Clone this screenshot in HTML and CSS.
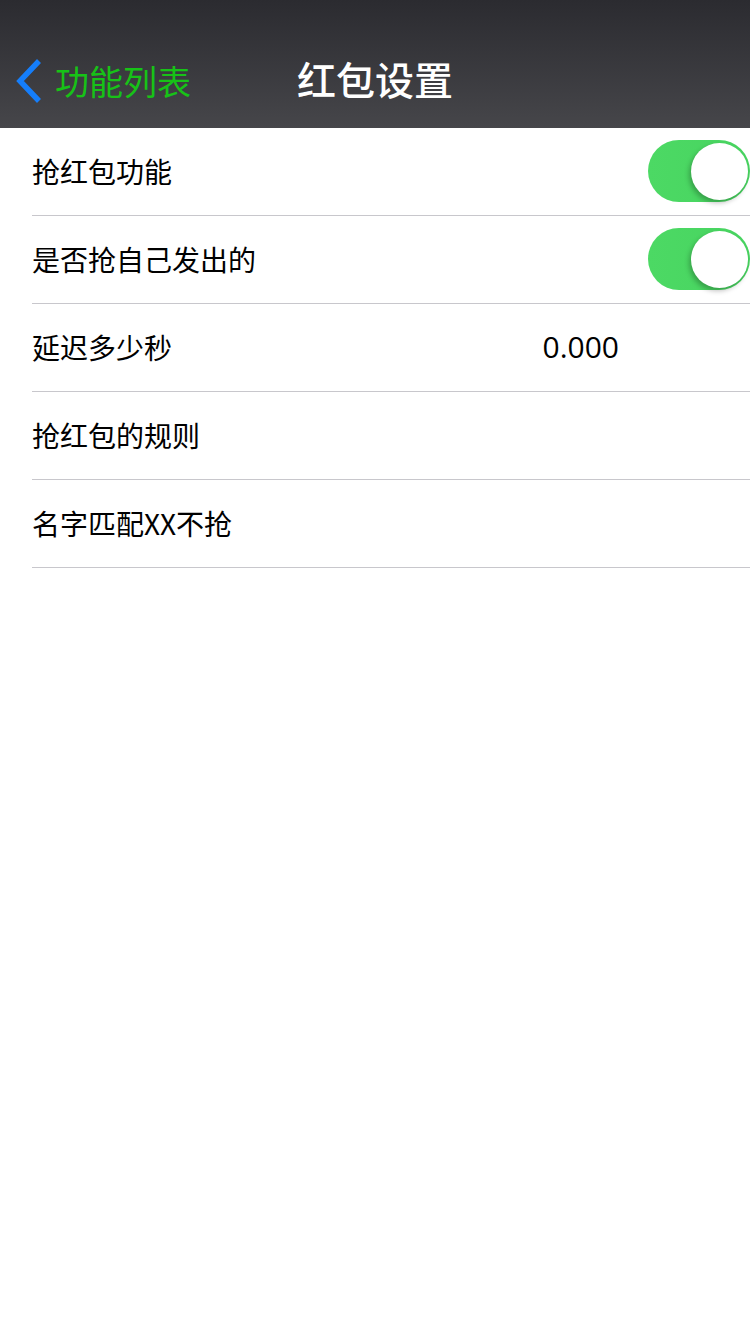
FILE: index.html
```html
<html lang="zh-CN">
<head>
	<meta http-equiv="Content-Type" content="text/html; charset=utf-8">
	<meta name="viewport" content="width=device-width, initial-scale=1.0">
	<title>红包设置</title>
	<link rel="stylesheet" href="styles.css">
</head>
<body>

	<div class="navbar">
		<div class="nav-back">
			<svg class="chevron" width="30" height="48" viewBox="0 0 30 48">
				<polyline points="25,4 6,24 25,44" fill="none" stroke="#157efb" stroke-width="5.5"/>
			</svg>
			<span>功能列表</span>
		</div>
		<div class="nav-title">红包设置</div>
	</div>

	<div class="list">
		<div class="cell">
			<span class="label">抢红包功能</span>
			<div class="switch on"><i class="knob"></i></div>
		</div>
		<div class="cell">
			<span class="label">是否抢自己发出的</span>
			<div class="switch on"><i class="knob"></i></div>
		</div>
		<div class="cell">
			<span class="label">延迟多少秒</span>
			<span class="value">0.000</span>
		</div>
		<div class="cell">
			<span class="label">抢红包的规则</span>
		</div>
		<div class="cell">
			<span class="label">名字匹配XX不抢</span>
		</div>
	</div>

</body>
</html>
```

FILE: styles.css
```css
body{
	margin: 0;
	padding: 0;
	background: #fff;
	font-family: "Open Sans", "Noto Sans CJK SC", sans-serif;
	overflow: hidden;
}

.navbar{
	height: 128px;
	padding-top: 40px;
	box-sizing: border-box;
	background: linear-gradient(#2b2b30, #46464a);
	display: flex;
	align-items: center;
	justify-content: center;
	position: relative;
}

.nav-back{
	position: absolute;
	left: 14px;
	top: 57px;
	display: flex;
	align-items: center;
	gap: 11px;
	color: #17c217;
	font-size: 34px;
	font-family: "Noto Sans CJK SC", sans-serif;
	line-height: 48px;
}

.nav-title{
	color: #fff;
	font-size: 39px;
	font-weight: 500;
	font-family: "Noto Sans CJK SC", sans-serif;
	margin-top: -12px;
}

.cell{
	height: 88px;
	margin-left: 32px;
	border-bottom: 1px solid #c8c7cc;
	box-sizing: border-box;
	display: flex;
	align-items: center;
	justify-content: space-between;
}

.label{
	font-size: 28px;
	color: #000;
	font-family: "Noto Sans CJK SC", sans-serif;
	margin-top: -2px;
}

.value{
	font-size: 30px;
	color: #000;
	margin-right: 131px;
	margin-top: -2px;
}

.switch{
	width: 102px;
	height: 62px;
	border-radius: 31px;
	background: linear-gradient(90deg, #4cd964, #48d460);
	position: relative;
	margin-top: -2px;
}

.knob{
	position: absolute;
	right: 2px;
	top: 3px;
	width: 57px;
	height: 57px;
	border-radius: 50%;
	background: #fff;
	box-shadow: -2px 3px 5px rgba(0, 0, 0, 0.25);
}
```
